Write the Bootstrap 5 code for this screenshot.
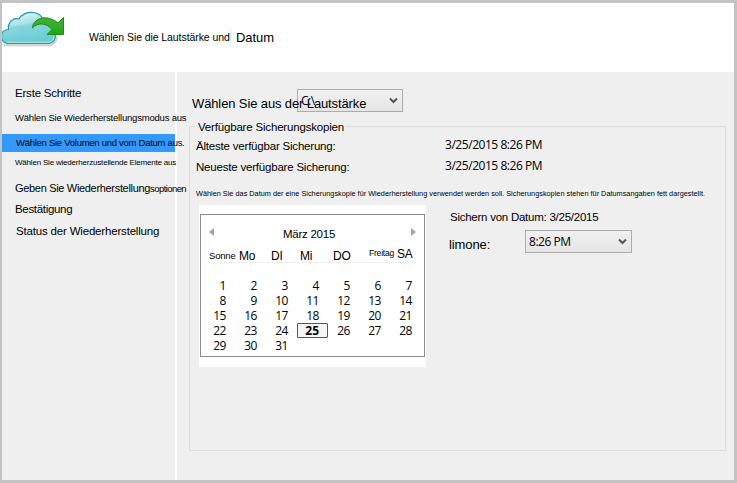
<!DOCTYPE html>
<html lang="de">
<head>
<meta charset="utf-8">
<meta name="viewport" content="width=device-width, initial-scale=1">
<title>Wiederherstellung</title>
<link href="https://cdn.jsdelivr.net/npm/bootstrap@5.3.0/dist/css/bootstrap.min.css" rel="stylesheet">
<style>
body{font-family:"Liberation Sans",Arial,sans-serif;font-size:11.5px;line-height:16px;letter-spacing:-.2px;color:#000;background:#c3c3c3;overflow:hidden}
.wizard{width:737px;height:483px;border:solid #c3c3c3;border-width:3px 3px 3px 2px;background:#fff}
.wizard-head{height:69px;white-space:nowrap}
.cloud{width:64px;height:44px;margin-top:6px}
.head-main{margin:26px 0 0 23px;font-size:10.5px;letter-spacing:-.08px;width:141px}
.head-sub{margin:27px 0 0 5px;font-size:13px;letter-spacing:-.06px}
.head-caret{width:1px;height:12px;margin-top:27px;background:#b8f4f8}
.steps{width:173px;background:#efefef;padding-top:11px}
.step{height:20px;padding-left:13px;line-height:20px;white-space:nowrap;position:relative;z-index:1}
.step-long{font-size:9.5px;letter-spacing:-.2px;margin:5px 0 6px}
.step-active{background:#3399ff;height:18px;line-height:18px;font-size:9.5px;letter-spacing:-.27px;padding-left:14px}
.step-tiny{font-size:8px;letter-spacing:-.2px;line-height:21px}
.step-options{font-size:11px;letter-spacing:-.32px;margin-top:6px}
.step-options span{font-size:9.5px;letter-spacing:-.58px}
.step-confirm{letter-spacing:-.32px;margin-top:1px}
.step-status{letter-spacing:-.18px;margin-top:2px;padding-left:14px}
.pane{margin-left:2px;background:#efefef;padding:17px 8px 0 12px}
.seg{font-family:"Open Sans","Noto Sans",sans-serif;font-size:12px;letter-spacing:-.45px}
.volume{height:37px;padding-left:3px}
.volume-label{font-size:13px;letter-spacing:-.12px;line-height:29px;width:175px;white-space:nowrap;z-index:1}
.combo{width:107px;height:23px;border:1px solid #acacac;background:linear-gradient(#f1f1f1,#e5e5e5);padding:0 4px 0 3px;line-height:20px}
.combo svg{width:9px;height:7px}
.volume .combo{width:106px;margin-left:-70px}
.group{height:325px;border:1px solid #dcdcdc}
.legend-text{margin:-8px 0 1px 5px;padding-left:3px;background:#efefef;height:16px;width:150px;letter-spacing:-.18px;white-space:nowrap}
.info{height:21px;line-height:20px;padding-left:6px}
.info .lab{width:249px}
.info .seg{line-height:18px}
.note{font-size:7.3px;letter-spacing:.013px;line-height:12px;height:12px;margin-top:10px;padding-left:6px;white-space:nowrap}
.picker{margin-top:5px}
.cal-back{width:227px;height:162px;background:#fff;margin-left:9px;padding:9px 1px 0}
.cal{height:143px;border:1px solid #8c8c8c}
.cal-title{height:34px;padding:0 8px;line-height:38px}
.cal-title span{margin-right:7px;letter-spacing:-.25px}
.cal-title svg{width:5px;height:8px;margin-top:13px}
.dow{display:grid;grid-template-columns:30px 32px 29px 33px 36px 28px 20px;height:14px;border-bottom:1px solid #f0f0f0;margin:0 7px;padding-left:1px;line-height:14px;font-size:12px;white-space:nowrap}
.dow .d1{font-size:9.5px}
.dow .d6{font-size:8.5px;line-height:8px}
.dow .d7{line-height:10px}
.days{display:grid;grid-template-columns:repeat(7,31px);grid-auto-rows:15px;margin:15px 0 0 3px;line-height:15px;text-align:right}
.days span{padding-right:9px}
.days .sel{border:1px solid #0a66c8;border-radius:1px;background:#f5f5f5;font-weight:700;line-height:13px;letter-spacing:0;padding-right:8px}
.chosen{padding:4px 0 0 24px}
.chosen-date{letter-spacing:-.25px}
.time{margin-top:5px}
.time-label{font-size:13px;letter-spacing:-.1px;width:76px;margin-left:-1px;line-height:29px}
</style>
<script src="https://cdn.jsdelivr.net/npm/bootstrap@5.3.0/dist/js/bootstrap.bundle.min.js"></script>
</head>
<body>
<div class="wizard d-flex flex-column">
 <header class="wizard-head d-flex">
  <svg class="cloud" viewBox="2 9 64 44"><defs><linearGradient id="cg" x1="0" y1="0" x2=".35" y2="1"><stop offset="0" stop-color="#eafafa"/><stop offset=".45" stop-color="#a9e1e5"/><stop offset=".5" stop-color="#8ad5dc"/><stop offset="1" stop-color="#68cdd5"/></linearGradient><linearGradient id="ag" x1="0" y1="0" x2="0" y2="1"><stop offset="0" stop-color="#48b03c"/><stop offset="1" stop-color="#1fa80f"/></linearGradient></defs>
  <path d="M4 45.300H50Q56 44 57 37" fill="none" stroke="#888" stroke-opacity=".4" stroke-width="2"/>
  <path d="M7 43.500C3 43 1.500 39 1.500 36C1.500 32 4.500 29.500 8.500 29.500C7.500 22 13 17.500 19 19C21 14.500 27 12 33 12.500C38 13 42 16 43 20C50 19 55 25 53 31C57 35 56 42 49 43.500Z" fill="url(#cg)" stroke="#149bad" stroke-width="1.200"/>
  <path d="M6.500 42.300H49Q54 41 54 36" fill="none" stroke="#c4f0f2" stroke-width=".8"/>
  <path d="M32.300 28C34 16 49 15 58 23L63.500 17.500V34.500H47L52 29.500C47 23 38 22 32.300 28Z" fill="url(#ag)" stroke="#1c8e14"/></svg>
  <div class="head-main">Wählen Sie die Lautstärke und</div>
  <i class="head-caret"></i>
  <div class="head-sub">Datum</div>
 </header>
 <div class="d-flex flex-grow-1">
  <nav class="steps">
   <div class="step">Erste Schritte</div>
   <div class="step step-long">Wählen Sie Wiederherstellungsmodus aus</div>
   <div class="step step-active">Wählen Sie Volumen und vom Datum aus.</div>
   <div class="step step-tiny">Wählen Sie wiederherzustellende Elemente aus</div>
   <div class="step step-options">Geben Sie Wiederherstellung<span>soptionen</span></div>
   <div class="step step-confirm">Bestätigung</div>
   <div class="step step-status">Status der Wiederherstellung</div>
  </nav>
  <main class="pane flex-grow-1">
   <div class="volume d-flex">
    <div class="volume-label position-relative">Wählen Sie aus der Lautstärke</div>
    <div class="combo seg d-flex justify-content-between align-items-center"><span>C:\</span><svg viewBox="0 0 9 7"><path d="M1 1.500L4.500 5L8 1.500" fill="none" stroke="#555" stroke-width="2"/></svg></div>
   </div>
   <section class="group">
    <div class="legend-text">Verfügbare Sicherungskopien</div>
    <div class="info d-flex"><div class="lab">Älteste verfügbar Sicherung:</div><div class="seg">3/25/2015 8:26 PM</div></div>
    <div class="info d-flex"><div class="lab">Neueste verfügbare Sicherung:</div><div class="seg">3/25/2015 8:26 PM</div></div>
    <div class="note">Wählen Sie das Datum der eine Sicherungskopie für Wiederherstellung verwendet werden soll. Sicherungskopien stehen für Datumsangaben fett dargestellt.</div>
    <div class="picker d-flex">
     <div class="cal-back"><div class="cal">
      <div class="cal-title d-flex justify-content-between"><svg viewBox="0 0 5 8"><path d="M5 0V8L0 4Z" fill="#a5a5a5"/></svg><span>März 2015</span><svg viewBox="0 0 5 8"><path d="M0 0V8L5 4Z" fill="#a5a5a5"/></svg></div>
      <div class="dow"><span class="d1">Sonne</span><span>Mo</span><span>DI</span><span>Mi</span><span>DO</span><span class="d6">Freitag</span><span class="d7">SA</span></div>
      <div class="days seg"><span>1</span><span>2</span><span>3</span><span>4</span><span>5</span><span>6</span><span>7</span><span>8</span><span>9</span><span>10</span><span>11</span><span>12</span><span>13</span><span>14</span><span>15</span><span>16</span><span>17</span><span>18</span><span>19</span><span>20</span><span>21</span><span>22</span><span>23</span><span>24</span><span class="sel">25</span><span>26</span><span>27</span><span>28</span><span>29</span><span>30</span><span>31</span></div>
     </div></div>
     <div class="chosen">
      <div class="chosen-date">Sichern von Datum: 3/25/2015</div>
      <div class="time d-flex"><div class="time-label">limone:</div><div class="combo seg d-flex justify-content-between align-items-center"><span>8:26 PM</span><svg viewBox="0 0 9 7"><path d="M1 1.500L4.500 5L8 1.500" fill="none" stroke="#555" stroke-width="2"/></svg></div></div>
     </div>
    </div>
   </section>
  </main>
 </div>
</div>
</body>
</html>
